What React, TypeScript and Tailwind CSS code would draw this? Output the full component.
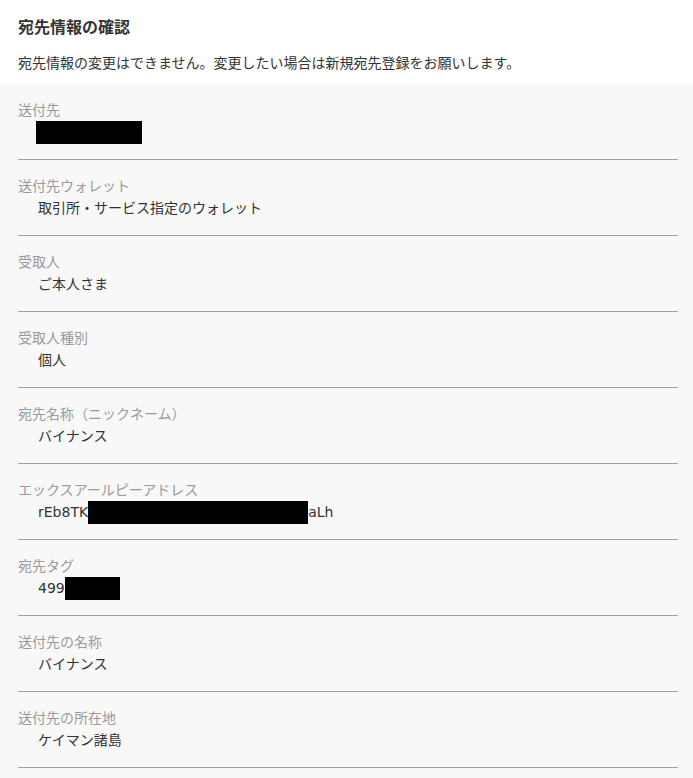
import React from 'react';

type Row = { label: string; value: React.ReactNode };

const Redact = ({ w }: { w: number }) => (
  <span className="inline-block h-[23px] bg-black align-middle" style={{ width: w }} />
);

const rows: Row[] = [
  { label: '送付先', value: <span className="-ml-[2px]"><Redact w={106} /></span> },
  { label: '送付先ウォレット', value: '取引所・サービス指定のウォレット' },
  { label: '受取人', value: 'ご本人さま' },
  { label: '受取人種別', value: '個人' },
  { label: '宛先名称（ニックネーム）', value: 'バイナンス' },
  {
    label: 'エックスアールピーアドレス',
    value: (
      <>
        rEb8TK<Redact w={220} />aLh
      </>
    ),
  },
  {
    label: '宛先タグ',
    value: (
      <>
        499<Redact w={55} />
      </>
    ),
  },
  { label: '送付先の名称', value: 'バイナンス' },
  { label: '送付先の所在地', value: 'ケイマン諸島' },
];

export default function App() {
  return (
    <div
      className="w-[693px] h-[778px] overflow-hidden bg-white text-[#333]"
      style={{ fontFamily: '"DejaVu Sans", "Noto Sans CJK JP", sans-serif' }}
    >
      {/* HEADER */}
      <div className="px-[18px] pt-[17px]">
        <h1 className="text-[16px] font-bold leading-[22px]">宛先情報の確認</h1>
        <p className="mt-[14px] text-[14px] leading-[20px]">
          宛先情報の変更はできません。変更したい場合は新規宛先登録をお願いします。
        </p>
      </div>

      {/* DETAILS */}
      <div className="mt-[11px] bg-[#f8f8f8] pl-[18px] pr-[15px] h-full">
        {rows.map((r) => (
          <div key={r.label} className="pt-[16px] pb-[17px] border-b border-[#a3a3a3]">
            <div className="text-[14px] leading-[20px] text-[#9a9a9a]">{r.label}</div>
            <div className="mt-[2px] pl-[20px] h-[20px] text-[14px] leading-[20px] text-[#333] flex items-center">
              <span className="whitespace-nowrap leading-[20px]">{r.value}</span>
            </div>
          </div>
        ))}
      </div>
    </div>
  );
}
